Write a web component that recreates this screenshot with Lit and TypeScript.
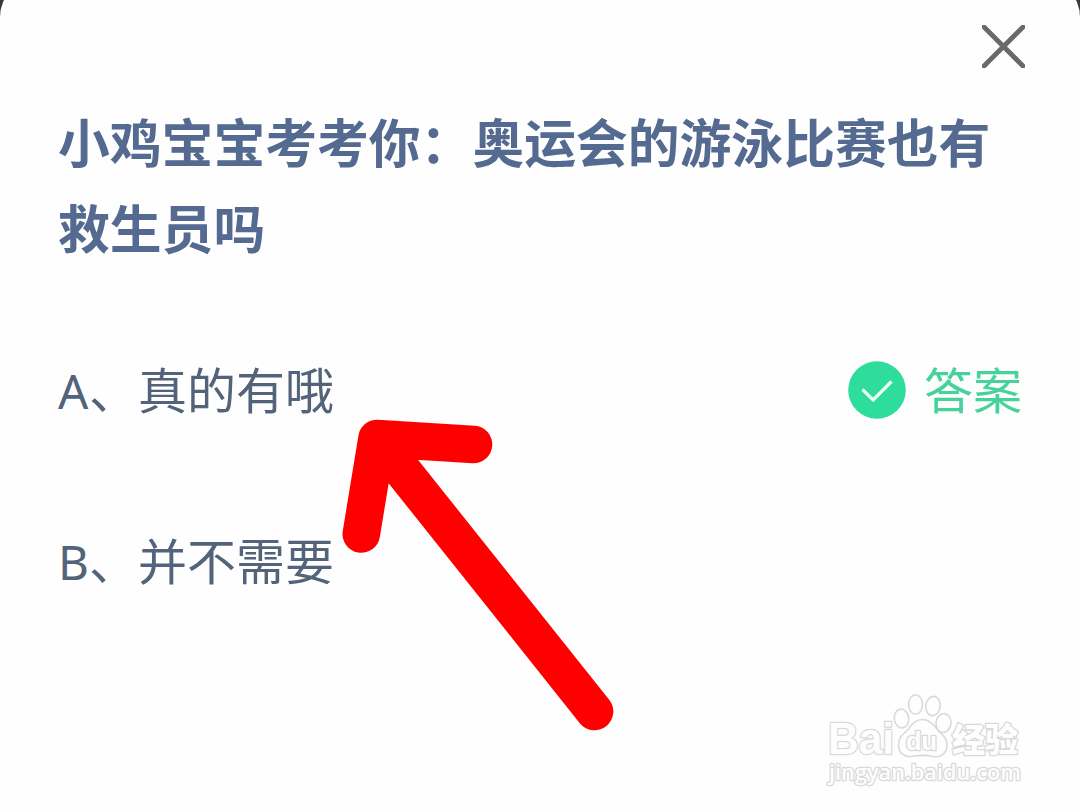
import { LitElement, html, css } from "lit";
import { customElement, property } from "lit/decorators.js";

@customElement("quiz-option")
export class QuizOption extends LitElement {
  @property() label = "";
  @property() text = "";
  @property({ type: Boolean }) answer = false;

  static get styles() {
    return css`
      :host {
        display: flex;
        justify-content: space-between;
        align-items: center;
        height: 171px;
        font-size: 49px;
        line-height: 72px;
        color: #53647a;
      }

      .text {
        padding-bottom: 1px;
      }

      .label {
        display: inline-block;
        width: 31px;
        font-family: "Noto Sans", sans-serif;
        font-size: 47.5px;
      }

      .answer {
        display: flex;
        align-items: center;
        gap: 18px;
        color: #45d39b;
      }

      .answer-text {
        padding-bottom: 4px;
      }

      .check {
        display: block;
        width: 58px;
        height: 58px;
        margin-bottom: -1px;
      }
    `;
  }

  render() {
    return html`
      <span class="text"><span class="label">${this.label}</span>、${this.text}</span>
      ${this.answer
        ? html`
            <span class="answer">
              <svg class="check" viewBox="0 0 58 58">
                <circle cx="29" cy="29" r="28.8" fill="#2edc9b" />
                <path
                  d="M14.5 28.5 L25.2 39 L43.5 20.5"
                  fill="none"
                  stroke="#e9fff5"
                  stroke-width="3.2"
                />
              </svg>
              <span class="answer-text">答案</span>
            </span>
          `
        : ""}
    `;
  }
}

@customElement("site-watermark")
export class SiteWatermark extends LitElement {
  static get styles() {
    return css`
      :host {
        display: block;
      }

      svg {
        display: block;
        width: 230px;
        height: 120px;
      }

      .outline {
        fill: #fefefe;
        stroke: #d9d9d9;
        stroke-width: 1.6px;
        stroke-linejoin: round;
      }

      text.outline {
        stroke: #d9d9d9;
        stroke-width: 2.6px;
        paint-order: stroke;
      }

      .brand {
        font-family: "Liberation Sans", sans-serif;
        font-weight: 700;
      }

      .product {
        font-family: "Noto Sans CJK SC", sans-serif;
        font-weight: 900;
      }

      .url {
        font-family: "Open Sans", sans-serif;
        font-weight: 600;
      }
    `;
  }

  render() {
    return html`
      <svg viewBox="0 0 230 120">
        <text class="outline brand" x="18" y="74" font-size="45" textLength="66" lengthAdjust="spacingAndGlyphs">Bai</text>
        <ellipse class="outline" cx="91.5" cy="38.5" rx="7.2" ry="9.5" transform="rotate(-8 91.5 38.5)" />
        <ellipse class="outline" cx="105.5" cy="24.5" rx="7" ry="9.7" />
        <ellipse class="outline" cx="123" cy="26" rx="7.2" ry="9.7" transform="rotate(8 123 26)" />
        <ellipse class="outline" cx="133.5" cy="43" rx="7.5" ry="9.5" transform="rotate(8 133.5 43)" />
        <path
          class="outline"
          d="M112 39.5 C105 39.5 101 45 98 49.5 C94 54 88.5 56 88.5 65 C88.5 73 94 77 101 76.5 C109 75 116 75 123 76.5 C131 78 137 73 137 65 C137 57 132 55 128 50.5 C123.5 44.5 119.5 39.5 112 39.5 Z"
        />
        <text class="outline brand" x="96" y="70" font-size="25" textLength="31" lengthAdjust="spacingAndGlyphs">du</text>
        <text class="outline product" x="142" y="72" font-size="33" textLength="66" lengthAdjust="spacingAndGlyphs">经验</text>
        <text class="outline url" x="19" y="100" font-size="22" textLength="192" lengthAdjust="spacingAndGlyphs">jingyan.baidu.com</text>
      </svg>
    `;
  }
}

@customElement("app-root")
export class AppRoot extends LitElement {
  static get styles() {
    return css`
      :host {
        display: flex;
        width: 1080px;
        height: 810px;
        overflow: hidden;
        position: relative;
        background-color: #39393c;
        font-family: "Noto Sans CJK SC", sans-serif;
      }

      .card {
        flex: 1;
        box-sizing: border-box;
        margin-top: -21px;
        padding: 46px 55px 0 58px;
        border-radius: 38px 38px 0 0;
        background-color: #fefefe;
      }

      .top {
        display: flex;
        justify-content: flex-end;
      }

      .close {
        display: block;
        width: 43px;
        height: 43px;
      }

      h1 {
        margin: 30px 0 34px;
        font-size: 51.8px;
        line-height: 86px;
        font-weight: 700;
        color: #546a91;
      }

      quiz-option {
        padding-right: 3px;
      }

      .arrow {
        position: absolute;
        left: 330px;
        top: 400px;
        width: 300px;
        height: 340px;
      }

      site-watermark {
        position: absolute;
        left: 810px;
        top: 680px;
      }
    `;
  }

  render() {
    return html`
      <div class="card">
        <div class="top">
          <svg class="close" viewBox="0 0 43 43">
            <path
              d="M2 2 L41 41 M41 2 L2 41"
              stroke="#696969"
              stroke-width="4.8"
              stroke-linecap="round"
            />
          </svg>
        </div>
        <h1>小鸡宝宝考考你：奥运会的游泳比赛也有<br />救生员吗</h1>
        <quiz-option label="A" text="真的有哦" answer></quiz-option>
        <quiz-option label="B" text="并不需要"></quiz-option>
      </div>
      <site-watermark></site-watermark>
      <svg class="arrow" viewBox="0 0 300 340">
        <path
          d="M31.3 134 L47 38.5 L143.5 44.5 M47 38.5 L264.5 311.5"
          fill="none"
          stroke="#ff0000"
          stroke-width="37.6"
          stroke-linecap="round"
          stroke-linejoin="round"
        />
      </svg>
    `;
  }
}
